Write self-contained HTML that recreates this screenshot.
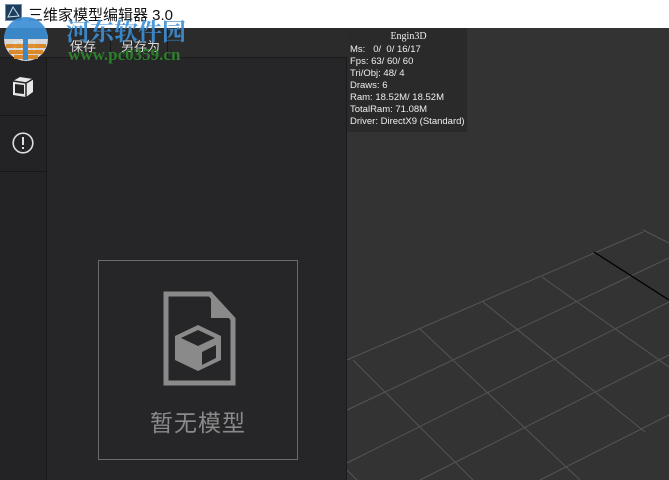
<!DOCTYPE html>
<html><head><meta charset="utf-8"><style>
*{margin:0;padding:0;box-sizing:border-box}
body{width:669px;height:480px;overflow:hidden;background:#333;position:relative;font-family:"Liberation Sans","Noto Sans CJK SC",sans-serif}
.title{position:absolute;left:0;top:0;width:669px;height:28px;background:#fff}
.title span{position:absolute;left:28px;top:4px;font-size:15px;color:#111}
.toolbar{position:absolute;left:0;top:28px;width:347px;height:30px;background:#2b2b2b;border-bottom:1px solid #1c1c1c}
.tb{position:absolute;top:8px;font-size:13px;color:#ddd}
.sep{position:absolute;top:0;width:1px;height:30px;background:#1a1a1a}
.side{position:absolute;left:0;top:58px;width:47px;height:422px;background:#232325;border-right:1px solid #181818}
.hl{position:absolute;left:0;width:46px;height:1px;background:#161616}
.main{position:absolute;left:47px;top:58px;width:300px;height:422px;background:#262628;border-right:1px solid #1a1a1a}
.box{position:absolute;left:98px;top:260px;width:200px;height:200px;border:1px solid #6a6a6a}
.box span{position:absolute;left:0;width:198px;top:143px;text-align:center;font-size:23px;color:#8a8a8a;letter-spacing:1px}
.stats{position:absolute;left:347px;top:28px;width:120px;height:104px;background:#2a2a2a;color:#eee;font-size:9.5px;line-height:12px;padding-left:3px}
.stats .h{text-align:center;font-family:"Liberation Serif",serif;font-size:10px;padding-top:3px;margin-bottom:1px}
.wm1{position:absolute;left:66px;top:12px;font-size:24px;font-weight:bold;color:#3c8fd6;font-family:"Noto Serif CJK SC","Noto Sans CJK SC",serif;opacity:.9}
.wm2{position:absolute;left:68px;top:45px;font-size:17px;font-weight:bold;color:#2d8a2d;font-family:"Liberation Serif",serif;opacity:.9}
</style></head><body>
<svg style="position:absolute;left:0;top:0" width="669" height="480">
<g stroke="#555" stroke-width="1" fill="none">
<line x1="347" y1="360" x2="643" y2="232"/>
<line x1="347" y1="410" x2="669" y2="258"/>
<line x1="347" y1="463" x2="669" y2="302"/>
<line x1="420" y1="480" x2="669" y2="355"/>
<line x1="540" y1="480" x2="669" y2="415"/>
<line x1="353" y1="360" x2="473" y2="480"/>
<line x1="420" y1="329" x2="580" y2="480"/>
<line x1="483" y1="302" x2="645" y2="432"/>
<line x1="542" y1="277" x2="669" y2="367"/>
<line x1="643" y1="230" x2="669" y2="243"/>
<line x1="347" y1="470" x2="357" y2="480"/>
</g>
<line x1="594" y1="252" x2="669" y2="300" stroke="#000" stroke-width="1.3"/>
</svg>
<div class="title"><span>三维家模型编辑器 3.0</span>
<svg style="position:absolute;left:5px;top:4px" width="17" height="17"><rect x="0.5" y="0.5" width="16" height="16" fill="#1d3d5c" stroke="#6a8db0"/><path d="M3 13 L8 3 L14 12 Z M3 13 L14 12" stroke="#cde" fill="none"/></svg></div>
<div class="toolbar">
<span class="tb" style="left:12px">打开</span>
<span class="tb" style="left:70px">保存</span>
<div class="sep" style="left:110px"></div>
<span class="tb" style="left:121px">另存为</span>
<div class="sep" style="left:167px"></div>
</div>
<div class="side">
<svg style="position:absolute;left:11px;top:17px" width="24" height="24" viewBox="0 0 24 24"><path d="M2 6 L9 2 L22 4 L22 17 L15 22 L2 20 Z" fill="#e8e8e8"/><path d="M2 6 L15 8 L22 4 M15 8 L15 22" stroke="#232325" stroke-width="1.5" fill="none"/><path d="M4 9 L13 10 L13 19 L4 18Z" fill="#232325"/></svg>
<div class="hl" style="top:57px"></div>
<svg style="position:absolute;left:12px;top:74px" width="22" height="22"><circle cx="11" cy="11" r="9.8" stroke="#ddd" stroke-width="1.6" fill="none"/><rect x="10" y="5" width="2" height="8" fill="#ddd"/><rect x="10" y="15" width="2" height="2" fill="#ddd"/></svg>
<div class="hl" style="top:113px"></div>
</div>
<div class="main"></div>
<div class="box">
<svg style="position:absolute;left:64px;top:30px" width="73" height="95" viewBox="0 0 73 95"><path d="M3 3 L47 3 L70 28 L70 92 L3 92 Z" fill="none" stroke="#8a8a8a" stroke-width="5"/><path d="M48 6 L48 27 L67 27Z" fill="#8a8a8a"/><path d="M12 45 L35 34 L58 45 L58 69 L35 80 L12 69 Z" fill="#8a8a8a"/><path d="M18 47 L35 39 L52 47 L35 55 Z" fill="#262628"/><path d="M39 61 L53 54 L53 67 L39 74Z" fill="#262628"/></svg>
<span>暂无模型</span></div>
<div class="stats"><div class="h">Engin3D</div>
Ms:&nbsp;&nbsp;&nbsp;0/&nbsp;&nbsp;0/ 16/17<br>Fps: 63/ 60/ 60<br>Tri/Obj: 48/ 4<br>Draws: 6<br>Ram: 18.52M/ 18.52M<br>TotalRam: 71.08M<br>Driver: DirectX9 (Standard)</div>
<svg style="position:absolute;left:3px;top:16px;opacity:.92" width="46" height="46"><circle cx="23" cy="23" r="22" fill="#e8e8e8"/><path d="M1 23 A22 22 0 0 1 45 23 Z" fill="#3c8fd6"/><path d="M3 30 L43 30 M6 36 L40 36 M11 41 L35 41" stroke="#e8902a" stroke-width="4"/><rect x="20" y="8" width="5" height="36" fill="#3c8fd6"/></svg>
<div class="wm1">河东软件园</div>
<div class="wm2">www.pc0359.cn</div>
</body></html>
